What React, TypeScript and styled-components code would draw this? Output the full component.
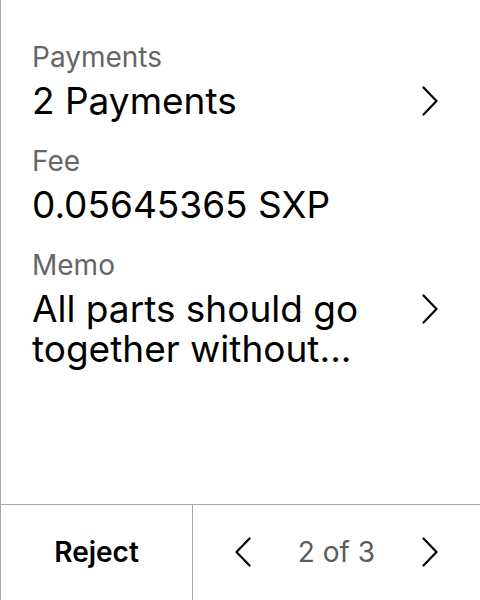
import React from "react";
import styled, { createGlobalStyle } from "styled-components";

const Global = createGlobalStyle`
  html, body { margin: 0; padding: 0; background: #fff; }
  body { font-family: Inter, "Noto Sans", sans-serif; color: #000; }
`;

const Screen = styled.div`
  width: 480px;
  height: 600px;
  box-sizing: border-box;
  border-left: 1px solid #a8a8a8;
  display: flex;
  flex-direction: column;
  background: #fff;
`;

const Content = styled.div`
  flex: 1;
  display: flex;
  flex-direction: column;
  gap: 24px;
  padding: 41px 42px 0 31px;
`;

const Field = styled.div`
  display: flex;
  flex-direction: column;
  gap: 8px;
`;

const Label = styled.div`
  font-size: 28px;
  line-height: 32px;
  color: #666;
`;

const ValueRow = styled.div`
  display: flex;
  justify-content: space-between;
  align-items: flex-start;
  gap: 24px;
`;

const Value = styled.div`
  font-size: 37px;
  line-height: 40px;
  color: #000;
`;

const IconBox = styled.div`
  height: 40px;
  display: flex;
  align-items: center;
  flex-shrink: 0;
`;

const Footer = styled.div`
  height: 96px;
  box-sizing: border-box;
  border-top: 1px solid #a8a8a8;
  display: flex;
`;

const RejectCell = styled.div`
  width: 192px;
  box-sizing: border-box;
  border-right: 1px solid #a8a8a8;
  display: flex;
  align-items: center;
  justify-content: center;
  padding-bottom: 2px;
  font-size: 28px;
  font-weight: 600;
  color: #000;
`;

const Pager = styled.div`
  flex: 1;
  display: flex;
  align-items: center;
  justify-content: space-between;
  padding: 0 42px 2px;
`;

const PageText = styled.div`
  font-size: 28px;
  color: #5c5c5c;
`;

const Chevron: React.FC<{ dir: "left" | "right" }> = ({ dir }) => (
  <svg width="16" height="30" viewBox="0 0 16 30" fill="none">
    <polyline
      points={dir === "right" ? "1.5,1.5 14.5,15 1.5,28.5" : "14.5,1.5 1.5,15 14.5,28.5"}
      stroke="#000"
      strokeWidth="2.2"
      strokeLinecap="round"
      strokeLinejoin="round"
    />
  </svg>
);

export default function App() {
  return (
    <>
      <Global />
      <Screen>
        <Content>
          <Field>
            <Label>Payments</Label>
            <ValueRow>
              <Value>2 Payments</Value>
              <IconBox>
                <Chevron dir="right" />
              </IconBox>
            </ValueRow>
          </Field>
          <Field>
            <Label>Fee</Label>
            <ValueRow>
              <Value>0.05645365 SXP</Value>
            </ValueRow>
          </Field>
          <Field>
            <Label>Memo</Label>
            <ValueRow>
              <Value>
                All parts should go
                <br />
                together without...
              </Value>
              <IconBox>
                <Chevron dir="right" />
              </IconBox>
            </ValueRow>
          </Field>
        </Content>
        <Footer>
          <RejectCell>Reject</RejectCell>
          <Pager>
            <Chevron dir="left" />
            <PageText>2 of 3</PageText>
            <Chevron dir="right" />
          </Pager>
        </Footer>
      </Screen>
    </>
  );
}
